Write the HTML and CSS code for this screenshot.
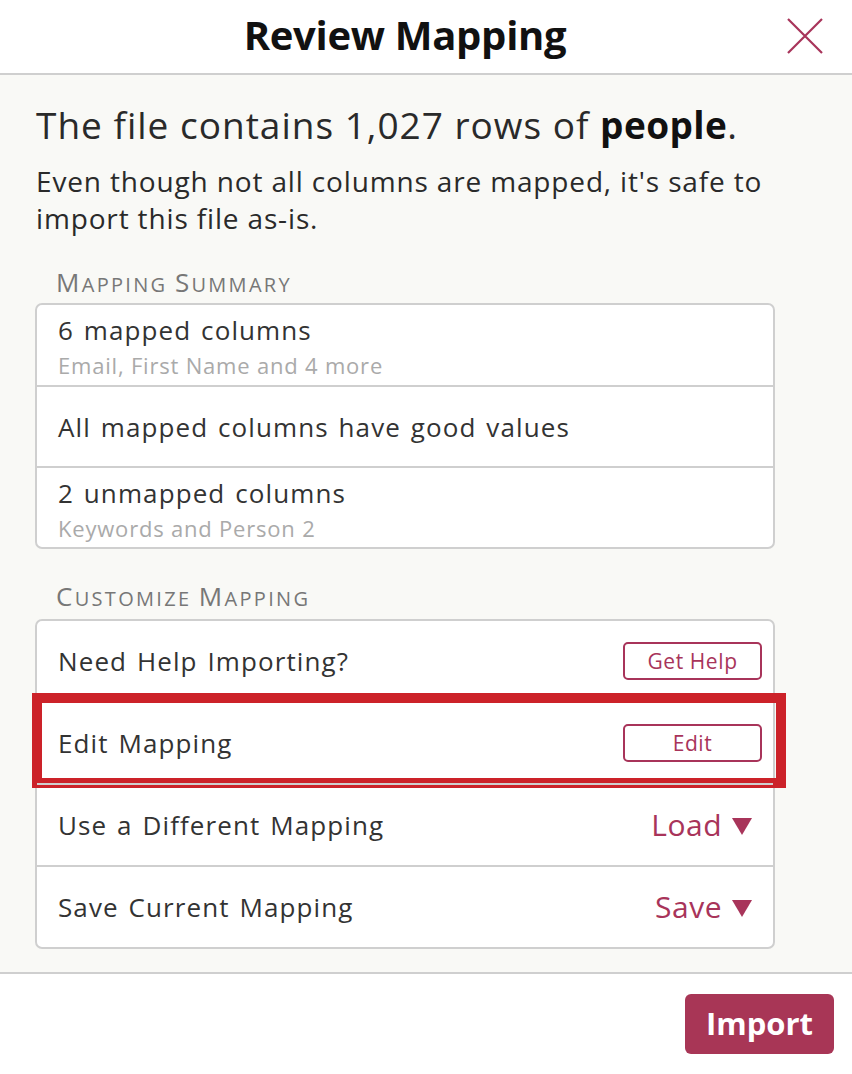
FILE: index.html
```html
<!DOCTYPE html>
<html>
<head>
<meta charset="utf-8">
<link rel="stylesheet" href="styles.css">
</head>
<body>
<div class="modal">
  <header class="header">
    <h1 class="title">Review Mapping</h1>
    <button class="close" aria-label="Close">
      <svg width="36" height="36" viewBox="0 0 36 36"><path d="M1 1 L35 35 M35 1 L1 35" stroke="#a8345a" stroke-width="2.2" fill="none"/></svg>
    </button>
  </header>
  <main class="main">
    <h2 class="lead">The file contains 1,027 rows of <b>people</b>.</h2>
    <p class="desc">Even though not all columns are mapped, it's safe to import this file as-is.</p>

    <div class="section-label first"><span class="cap">M</span>apping <span class="cap">S</span>ummary</div>
    <div class="card summary">
      <div class="row row-two">
        <div class="row-title">6 mapped columns</div>
        <div class="row-sub">Email, First Name and 4 more</div>
      </div>
      <div class="row">
        <div class="row-title">All mapped columns have good values</div>
      </div>
      <div class="row row-two">
        <div class="row-title">2 unmapped columns</div>
        <div class="row-sub">Keywords and Person 2</div>
      </div>
    </div>

    <div class="section-label second"><span class="cap">C</span>ustomize <span class="cap">M</span>apping</div>
    <div class="card customize">
      <div class="row action">
        <div class="row-title">Need Help Importing?</div>
        <button class="btn-outline">Get Help</button>
      </div>
      <div class="row action">
        <div class="row-title">Edit Mapping</div>
        <button class="btn-outline">Edit</button>
        <div class="highlight"></div>
      </div>
      <div class="row action">
        <div class="row-title">Use a Different Mapping</div>
        <span class="dropdown">Load<svg class="tri" width="20" height="17" viewBox="0 0 20 17"><path d="M0 0 H20 L10 17 Z" fill="#a8345a"/></svg></span>
      </div>
      <div class="row action">
        <div class="row-title">Save Current Mapping</div>
        <span class="dropdown">Save<svg class="tri" width="20" height="17" viewBox="0 0 20 17"><path d="M0 0 H20 L10 17 Z" fill="#a8345a"/></svg></span>
      </div>
    </div>
  </main>
  <footer class="footer">
    <button class="btn-primary">Import</button>
  </footer>
</div>
</body>
</html>
```

FILE: styles.css
```css
* { box-sizing: border-box; }
html, body { margin: 0; padding: 0; background: #fff; }
body { font-family: "Open Sans", "Liberation Sans", sans-serif; color: #333; }

.modal { width: 852px; height: 1074px; display: flex; flex-direction: column; }

.header {
  position: relative;
  height: 75px;
  border-bottom: 2px solid #cfcfcf;
  display: flex;
  align-items: center;
  justify-content: center;
  padding: 0 42px 4px 0;
}
.title {
  margin: 0;
  font-size: 40px;
  font-weight: 700;
  color: #111;
  letter-spacing: -0.3px;
}
.close {
  position: absolute;
  right: 29px;
  top: 18px;
  border: 0;
  background: none;
  padding: 0;
  width: 36px;
  height: 36px;
}
.close svg { display: block; }

.main {
  background: #f9f9f6;
  height: 897px;
  padding: 28px 77px 0 35px;
}
.lead {
  margin: 0 0 0 1px;
  font-size: 37px;
  font-weight: 400;
  line-height: 44px;
  letter-spacing: 1px;
  color: #2a2a2a;
}
.lead b { font-weight: 700; color: #111; letter-spacing: 0.4px; }
.desc {
  margin: 16px 0 0 1px;
  font-size: 28px;
  line-height: 37px;
  letter-spacing: 0.85px;
  color: #2a2a2a;
}
.section-label {
  height: 30px;
  margin: 33px 0 3px 21px;
  font-size: 20px;
  line-height: 30px;
  text-transform: uppercase;
  color: #777;
  letter-spacing: 2.3px;
  white-space: nowrap;
}
.section-label.second { margin-top: 35px; margin-bottom: 5px; }
.section-label .cap { font-size: 26px; line-height: 20px; }

.card {
  background: #fff;
  border: 2px solid #cfcfcf;
  border-radius: 7px;
}
.row {
  position: relative;
  height: 82px;
  padding: 0 11px 0 21px;
  display: flex;
  flex-direction: column;
  justify-content: center;
  border-top: 2px solid #cfcfcf;
}
.row:first-child { border-top: 0; }
.summary .row:nth-child(1) { height: 80px; }
.summary .row:nth-child(2) { height: 81px; }
.summary .row:nth-child(3) { height: 81px; }
.customize .row:nth-child(1) { height: 80px; }
.customize .row:nth-child(4) { height: 82px; }

.row-title { font-size: 26px; line-height: 34px; color: #333; letter-spacing: 1.1px; word-spacing: 2px; }
.row-sub { font-size: 22px; line-height: 30px; color: #aaa; letter-spacing: 0.8px; margin-top: 3px; }
.row-two { justify-content: flex-start; padding-top: 8px; }

.action { flex-direction: row; align-items: center; justify-content: space-between; }
.btn-outline {
  width: 139px;
  height: 38px;
  border: 2px solid #a8345a;
  border-radius: 5px;
  background: #fff;
  color: #a8345a;
  font-family: inherit;
  font-size: 21px;
  letter-spacing: 0.6px;
  padding: 0;
}
.dropdown {
  display: flex;
  align-items: center;
  color: #a8345a;
  font-size: 30px;
  line-height: 34px;
  margin-right: 10px;
  letter-spacing: 0.5px;
}
.tri { margin-left: 10px; margin-top: 2px; display: block; }

.highlight {
  position: absolute;
  left: -5px;
  top: -10px;
  right: -13px;
  bottom: -5px;
  border: 10px solid #cc2229;
  pointer-events: none;
}

.footer {
  flex: 1;
  border-top: 2px solid #cfcfcf;
  display: flex;
  justify-content: flex-end;
  align-items: flex-start;
  padding: 20px 18px 0 0;
}
.btn-primary {
  width: 149px;
  height: 60px;
  border: 0;
  border-radius: 6px;
  background: #a83656;
  color: #fff;
  font-family: inherit;
  font-size: 31px;
  font-weight: 700;
  padding: 0 0 2px;
}
```
